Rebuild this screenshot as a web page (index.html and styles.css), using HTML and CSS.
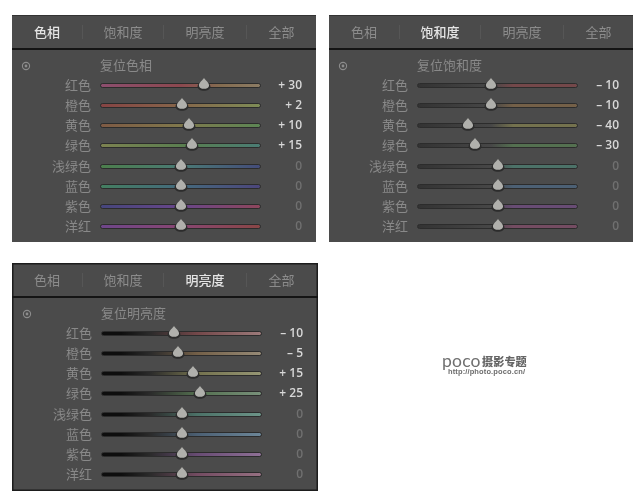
FILE: index.html
```html
<!DOCTYPE html>
<html lang="zh-CN">
<head>
<meta charset="utf-8">
<title>HSL</title>
<link rel="stylesheet" href="styles.css">
</head>
<body>
<svg class="defs" width="0" height="0" aria-hidden="true">
  <symbol id="knob" viewBox="0 0 13 13">
    <path d="M6.5 1.5 C7.5 3.5 12.5 6 12.5 8.8 C12.5 11.4 9.5 12.8 6.5 12.8 C3.5 12.8 0.5 11.4 0.5 8.8 C0.5 6 5.5 3.5 6.5 1.5Z" fill="#2c2c2c"/>
    <path d="M6.5 0.8 C7.5 3 11.2 5.2 11.2 7.8 C11.2 10 9 11 6.5 11 C4 11 1.8 10 1.8 7.8 C1.8 5.2 5.5 3 6.5 0.8Z" fill="#b0b0ac"/>
  </symbol>
  <symbol id="dot" viewBox="0 0 10 10">
    <circle cx="5" cy="5" r="3.6" fill="none" stroke="#8c8c8c" stroke-width="1.1"/>
    <circle cx="5" cy="5" r="1.4" fill="#8c8c8c"/>
  </symbol>
</svg>
<main class="board">

<section class="panel hue">
  <div class="tabs">
    <span class="tab on">色相</span><span class="tab">饱和度</span><span class="tab">明亮度</span><span class="tab">全部</span>
  </div>
  <div class="reset"><svg class="dot"><use href="#dot"/></svg><span class="reset-text">复位色相</span></div>
  <div class="row c-red"><span class="label">红色</span><div class="track"><svg class="knob" style="left:64.6%"><use href="#knob"/></svg></div><span class="value on">+ 30</span></div>
  <div class="row c-orange"><span class="label">橙色</span><div class="track"><svg class="knob" style="left:50.9%"><use href="#knob"/></svg></div><span class="value on">+ 2</span></div>
  <div class="row c-yellow"><span class="label">黄色</span><div class="track"><svg class="knob" style="left:55.3%"><use href="#knob"/></svg></div><span class="value on">+ 10</span></div>
  <div class="row c-green"><span class="label">绿色</span><div class="track"><svg class="knob" style="left:57.1%"><use href="#knob"/></svg></div><span class="value on">+ 15</span></div>
  <div class="row c-aqua"><span class="label">浅绿色</span><div class="track"><svg class="knob" style="left:50.6%"><use href="#knob"/></svg></div><span class="value">0</span></div>
  <div class="row c-blue"><span class="label">蓝色</span><div class="track"><svg class="knob" style="left:50.6%"><use href="#knob"/></svg></div><span class="value">0</span></div>
  <div class="row c-purple"><span class="label">紫色</span><div class="track"><svg class="knob" style="left:50.6%"><use href="#knob"/></svg></div><span class="value">0</span></div>
  <div class="row c-magenta"><span class="label">洋红</span><div class="track"><svg class="knob" style="left:50.6%"><use href="#knob"/></svg></div><span class="value">0</span></div>
</section>

<section class="panel sat">
  <div class="tabs">
    <span class="tab">色相</span><span class="tab on">饱和度</span><span class="tab">明亮度</span><span class="tab">全部</span>
  </div>
  <div class="reset"><svg class="dot"><use href="#dot"/></svg><span class="reset-text">复位饱和度</span></div>
  <div class="row c-red"><span class="label">红色</span><div class="track"><svg class="knob" style="left:45.8%"><use href="#knob"/></svg></div><span class="value on">– 10</span></div>
  <div class="row c-orange"><span class="label">橙色</span><div class="track"><svg class="knob" style="left:45.8%"><use href="#knob"/></svg></div><span class="value on">– 10</span></div>
  <div class="row c-yellow"><span class="label">黄色</span><div class="track"><svg class="knob" style="left:31.7%"><use href="#knob"/></svg></div><span class="value on">– 40</span></div>
  <div class="row c-green"><span class="label">绿色</span><div class="track"><svg class="knob" style="left:36%"><use href="#knob"/></svg></div><span class="value on">– 30</span></div>
  <div class="row c-aqua"><span class="label">浅绿色</span><div class="track"><svg class="knob" style="left:50.6%"><use href="#knob"/></svg></div><span class="value">0</span></div>
  <div class="row c-blue"><span class="label">蓝色</span><div class="track"><svg class="knob" style="left:50.6%"><use href="#knob"/></svg></div><span class="value">0</span></div>
  <div class="row c-purple"><span class="label">紫色</span><div class="track"><svg class="knob" style="left:50.6%"><use href="#knob"/></svg></div><span class="value">0</span></div>
  <div class="row c-magenta"><span class="label">洋红</span><div class="track"><svg class="knob" style="left:50.6%"><use href="#knob"/></svg></div><span class="value">0</span></div>
</section>

<section class="panel lum">
  <div class="tabs">
    <span class="tab">色相</span><span class="tab">饱和度</span><span class="tab on">明亮度</span><span class="tab">全部</span>
  </div>
  <div class="reset"><svg class="dot"><use href="#dot"/></svg><span class="reset-text">复位明亮度</span></div>
  <div class="row c-red"><span class="label">红色</span><div class="track"><svg class="knob" style="left:45.3%"><use href="#knob"/></svg></div><span class="value on">– 10</span></div>
  <div class="row c-orange"><span class="label">橙色</span><div class="track"><svg class="knob" style="left:48.1%"><use href="#knob"/></svg></div><span class="value on">– 5</span></div>
  <div class="row c-yellow"><span class="label">黄色</span><div class="track"><svg class="knob" style="left:57.1%"><use href="#knob"/></svg></div><span class="value on">+ 15</span></div>
  <div class="row c-green"><span class="label">绿色</span><div class="track"><svg class="knob" style="left:61.5%"><use href="#knob"/></svg></div><span class="value on">+ 25</span></div>
  <div class="row c-aqua"><span class="label">浅绿色</span><div class="track"><svg class="knob" style="left:50.6%"><use href="#knob"/></svg></div><span class="value">0</span></div>
  <div class="row c-blue"><span class="label">蓝色</span><div class="track"><svg class="knob" style="left:50.6%"><use href="#knob"/></svg></div><span class="value">0</span></div>
  <div class="row c-purple"><span class="label">紫色</span><div class="track"><svg class="knob" style="left:50.6%"><use href="#knob"/></svg></div><span class="value">0</span></div>
  <div class="row c-magenta"><span class="label">洋红</span><div class="track"><svg class="knob" style="left:50.6%"><use href="#knob"/></svg></div><span class="value">0</span></div>
</section>

<aside class="brand">
  <div class="brand-top"><span class="brand-name">poco</span><span class="brand-tag">摄影专题</span></div>
  <div class="brand-url">http://photo.poco.cn/</div>
</aside>

</main>
</body>
</html>
```

FILE: styles.css
```css
* { box-sizing: border-box; }

html, body {
  margin: 0;
  background: #fff;
}

.defs { position: absolute; }

.board {
  display: grid;
  grid-template-columns: 306px 304px;
  column-gap: 11px;
  row-gap: 21px;
  padding: 15px 0 0 12px;
  font-family: "Noto Sans CJK SC", "Noto Sans", sans-serif;
}

.panel {
  width: 304px;
  height: 227px;
  background: #4b4b4b;
  color: #898989;
  box-shadow: inset 0 1px 0 #333;
  filter: blur(0.45px);
}

.panel.lum {
  width: 306px;
  height: 228px;
  padding-left: 1px;
  box-shadow: inset 0 0 0 1.5px #1d1d1d;
}

.tabs {
  display: grid;
  grid-template-columns: 70px 81px 83px 70px;
  height: 35px;
  border-bottom: 2px solid #141414;
  align-items: center;
}

.lum .tabs { margin-left: -1px; }

.tab {
  font-size: 13px;
  line-height: 14px;
  text-align: center;
  font-weight: 400;
  color: #8c8c8c;
  border-left: 1px solid #565656;
}

.tab:first-child { border-left: 0; }

.tab.on {
  color: #e4e4e4;
  font-weight: 500;
}

.reset {
  display: flex;
  align-items: center;
  height: 20px;
  margin-top: 5px;
}

.dot {
  width: 10px;
  height: 10px;
  margin: 1px 0 0 9px;
}

.reset-text {
  margin-left: 69px;
  font-size: 13px;
  font-weight: 400;
  line-height: 20px;
}

.row {
  display: grid;
  grid-template-columns: 79px 161px 32px;
  column-gap: 9px;
  align-items: center;
  height: 20.14px;
}

.label {
  font-size: 13px;
  font-weight: 400;
  line-height: 20px;
  text-align: right;
}

.value {
  font-family: "Open Sans", "Liberation Sans", sans-serif;
  font-size: 12px;
  font-weight: 600;
  line-height: 20px;
  text-align: right;
  color: #707070;
  white-space: nowrap;
}

.value.on { color: #d8d8d8; }

.track {
  position: relative;
  height: 5px;
  margin-top: 1px;
  border: 1px solid #2c2c2c;
  border-radius: 3px;
}

.knob {
  position: absolute;
  top: -7px;
  width: 14px;
  height: 14px;
  margin-left: -7px;
}

.c-red { --c: #74484a; --l: #9c7a7a; }
.c-orange { --c: #746048; --l: #968a76; }
.c-yellow { --c: #74724e; --l: #969674; }
.c-green { --c: #547050; --l: #78907a; }
.c-aqua { --c: #4c7268; --l: #6c9488; }
.c-blue { --c: #4c6074; --l: #6c8698; }
.c-purple { --c: #684c74; --l: #8e7096; }
.c-magenta { --c: #744c62; --l: #967082; }

.sat .track { background: linear-gradient(90deg, #333, #474747 46%, var(--c) 60%, var(--c)); }
.lum .track { background: linear-gradient(90deg, #0e0e0e 12%, #2a2a2a 30%, var(--c) 60%, var(--l)); }

.hue .c-red .track { background: linear-gradient(90deg, #8c4e6e, #8c484f 50%, #846c50 75%, #8c7c64); }
.hue .c-orange .track { background: linear-gradient(90deg, #864444, #86664a 50%, #7e8c56); }
.hue .c-yellow .track { background: linear-gradient(90deg, #7e5a44, #80784c 50%, #5c8654); }
.hue .c-green .track { background: linear-gradient(90deg, #7c8250, #587e50 55%, #4a7c74); }
.hue .c-aqua .track { background: linear-gradient(90deg, #4c7e4c, #4a7a74 50%, #444c7a); }
.hue .c-blue .track { background: linear-gradient(90deg, #447e60, #446a7c 50%, #4c467c); }
.hue .c-purple .track { background: linear-gradient(90deg, #46467c, #68468a 50%, #8e465c); }
.hue .c-magenta .track { background: linear-gradient(90deg, #6e468a, #884672 50%, #8a4646); }

.brand {
  margin: 92px 0 0 113px;
  width: 88px;
  filter: blur(0.4px);
}

.brand-top {
  display: flex;
  align-items: flex-start;
  height: 13px;
}

.brand-name {
  width: 40px;
  font-family: "Lato", "Open Sans", sans-serif;
  font-size: 17.5px;
  line-height: 12px;
  letter-spacing: 0.2px;
  color: #707070;
}

.brand-tag {
  font-size: 11.2px;
  font-weight: 900;
  line-height: 13px;
  color: #666;
  white-space: nowrap;
}

.brand-url {
  margin-left: 6px;
  font-family: "Liberation Sans", sans-serif;
  font-size: 7.5px;
  font-weight: 700;
  line-height: 8px;
  letter-spacing: 0.12px;
  color: #6c6c6c;
  white-space: nowrap;
}
```
